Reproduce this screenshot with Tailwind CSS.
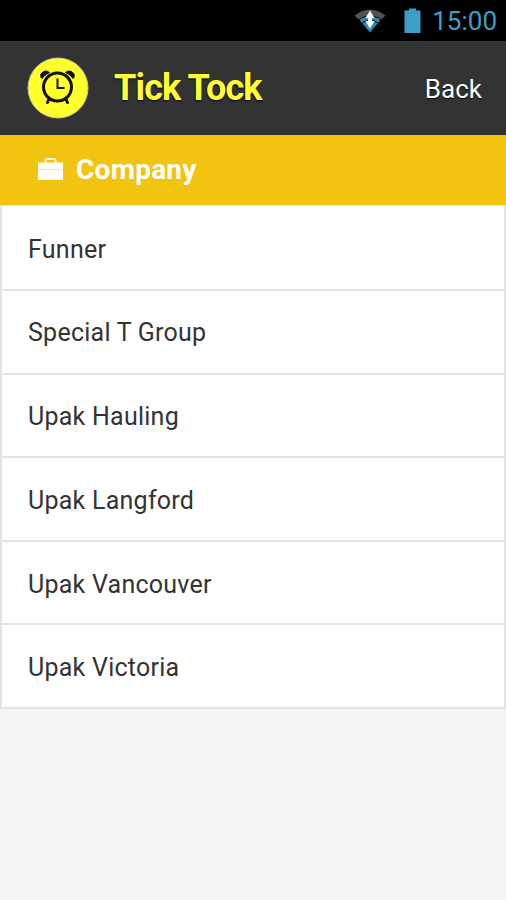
<!DOCTYPE html>
<html lang="en">
<head>
<meta charset="utf-8">
<title>Tick Tock</title>
<script src="https://cdn.jsdelivr.net/npm/@tailwindcss/browser@4"></script>
</head>
<body class="flex h-[900px] w-[506px] flex-col overflow-hidden bg-[#f4f4f4] font-[Roboto,sans-serif] text-[#333]">
  <div class="flex h-[41px] shrink-0 items-center justify-end bg-black pr-[9px]">
    <svg class="mr-[17px] h-[28px] w-[34px]" viewBox="0 0 34 28">
      <path d="M1.500 8.500Q17 -3.500 32.500 8.500L28.500 12.500Q17 4.500 5.500 12.500Z" fill="#55504f"/>
      <path d="M6.500 13Q17 5.500 27.500 13L17 25.500Z" fill="#2b8fb5"/>
      <path d="M9 16Q17 10.500 25 16" fill="none" stroke="#0b2a38" stroke-width="1.300"/>
      <path d="M17 3.500L21.500 11H12.500ZM12.500 14H21.500L17 21.500ZM15 11H19V14H15Z" fill="#fff"/>
    </svg>
    <svg class="mr-[11px] h-[26px] w-[17px]" viewBox="0 0 17 26"><path d="M0.500 2.500H5V0.500H12V2.500H16.500V25H0.500Z" fill="#3d9fc8"/></svg>
    <span class="pt-px text-[26px] leading-[40px] text-[#3d9fc8]">15:00</span>
  </div>
  <header class="flex h-[94px] shrink-0 items-center bg-[#333] pr-6 pl-[27px]">
    <svg class="h-[62px] w-[62px]" viewBox="0 0 62 62">
      <circle cx="31" cy="31" r="30" fill="#ffff2b" stroke="#c5c59b"/>
      <g fill="none" stroke="#111108" stroke-linecap="round">
        <circle cx="30.500" cy="30" r="14" stroke-width="3"/>
        <path d="M22 42L20.500 45.500M39 42L40.500 45.500" stroke-width="3"/>
        <path d="M30.500 21.500V31H37.500" stroke-width="2" stroke-linecap="butt"/>
      </g>
      <path d="M14 20.500Q12.500 16.500 16.500 14.500Q20 13 22.500 15.500Q17.500 17.500 15 21.500ZM47 20.500Q48.500 16.500 44.500 14.500Q41 13 38.500 15.500Q43.500 17.500 46 21.500Z" fill="#111108" stroke="#111108"/>
    </svg>
    <h1 class="ml-[25px] flex-1 text-[36px] leading-[40px] font-bold tracking-[-0.85px] whitespace-nowrap text-[#ffff33] [text-shadow:0_1px_2px_#000]">Tick Tock</h1>
    <span class="pt-px text-[26px] leading-[30px] text-white [text-shadow:0_1px_1px_#000]">Back</span>
  </header>
  <div class="flex h-[70px] shrink-0 items-center bg-[#f1c40f] pl-[37px]">
    <svg class="mb-0.5 h-[24px] w-[27px]" viewBox="0 0 27 24">
      <path d="M8.500 6V3.500Q8.500 2 10 2H17Q18.500 2 18.500 3.500V6" fill="none" stroke="#fff8df" stroke-width="2"/>
      <path d="M1 5.500H26V12H1ZM1 13H26V23H1Z" fill="#fffdf5"/>
      <path d="M1 12.500H26" stroke="#fbe9a8"/>
    </svg>
    <h2 class="ml-3 text-[28px] leading-[32px] font-bold tracking-[0.25px] text-white">Company</h2>
  </div>
  <ul class="flex h-[504px] shrink-0 flex-col divide-y-2 divide-[#e3e3e3] border-x-2 border-t border-b-2 border-[#e3e3e3] bg-white text-[25px] tracking-[0.25px]">
    <li class="flex h-[85px] items-center pt-1 pl-[26px]"><span>Funner</span></li>
    <li class="flex h-[83.600px] items-center pt-0.5 pl-[26px]"><span>Special T Group</span></li>
    <li class="flex h-[83.600px] items-center pt-0.5 pl-[26px]"><span>Upak Hauling</span></li>
    <li class="flex h-[83.600px] items-center pt-1 pl-[26px]"><span>Upak Langford</span></li>
    <li class="flex h-[83.600px] items-center pt-1 pl-[26px]"><span>Upak Vancouver</span></li>
    <li class="flex flex-1 items-center pt-1 pl-[26px]"><span>Upak Victoria</span></li>
  </ul>
</body>
</html>
